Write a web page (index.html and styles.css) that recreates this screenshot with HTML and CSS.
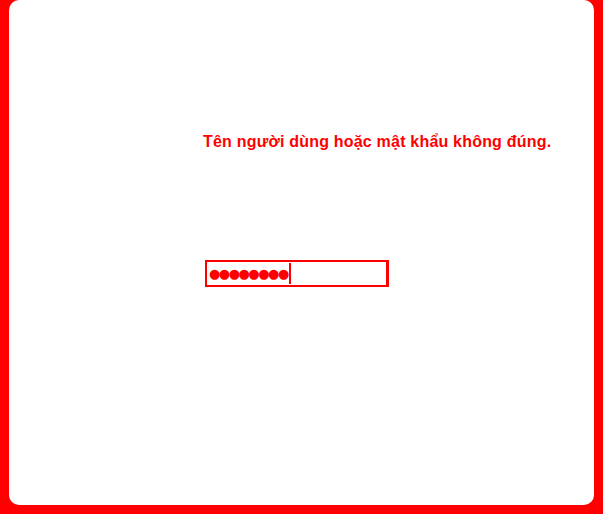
FILE: index.html
```html
<!DOCTYPE html>
<html lang="vi">
<head>
<meta charset="utf-8">
<link rel="stylesheet" href="styles.css">
</head>
<body>
<div class="card">
  <p class="error">Tên người dùng hoặc mật khẩu không đúng.</p>
  <div class="field"><span class="dots">●●●●●●●●</span><span class="caret"></span></div>
</div>
</body>
</html>
```
FILE: styles.css
```css
html, body { margin: 0; padding: 0; background: #ff0000; }
body { width: 603px; height: 514px; overflow: hidden; font-family: "Liberation Sans", Arial, sans-serif; }
.card {
  box-sizing: border-box;
  margin: 0 9px 0 9px;
  height: 505px;
  background: #fff;
  border-radius: 10px;
  padding: 132px 0 0 194px;
}
.error {
  margin: 0;
  color: #ff0000;
  font-weight: bold;
  font-size: 16px;
  line-height: 20px;
  letter-spacing: 0.2px;
}
.field {
  margin: 108px 0 0 2px;
  box-sizing: border-box;
  width: 184px;
  height: 27px;
  border: 2px solid #ff0000;
  border-right-width: 3px;
  display: flex;
  align-items: center;
  padding-left: 2px;
}
.dots {
  color: #ff0000;
  font-family: "DejaVu Sans", sans-serif;
  font-size: 13px;
  letter-spacing: -1.5px;
  line-height: 1;
}
.caret { width: 2px; height: 21px; background: #ff0000; margin-left: 1px; }
```
